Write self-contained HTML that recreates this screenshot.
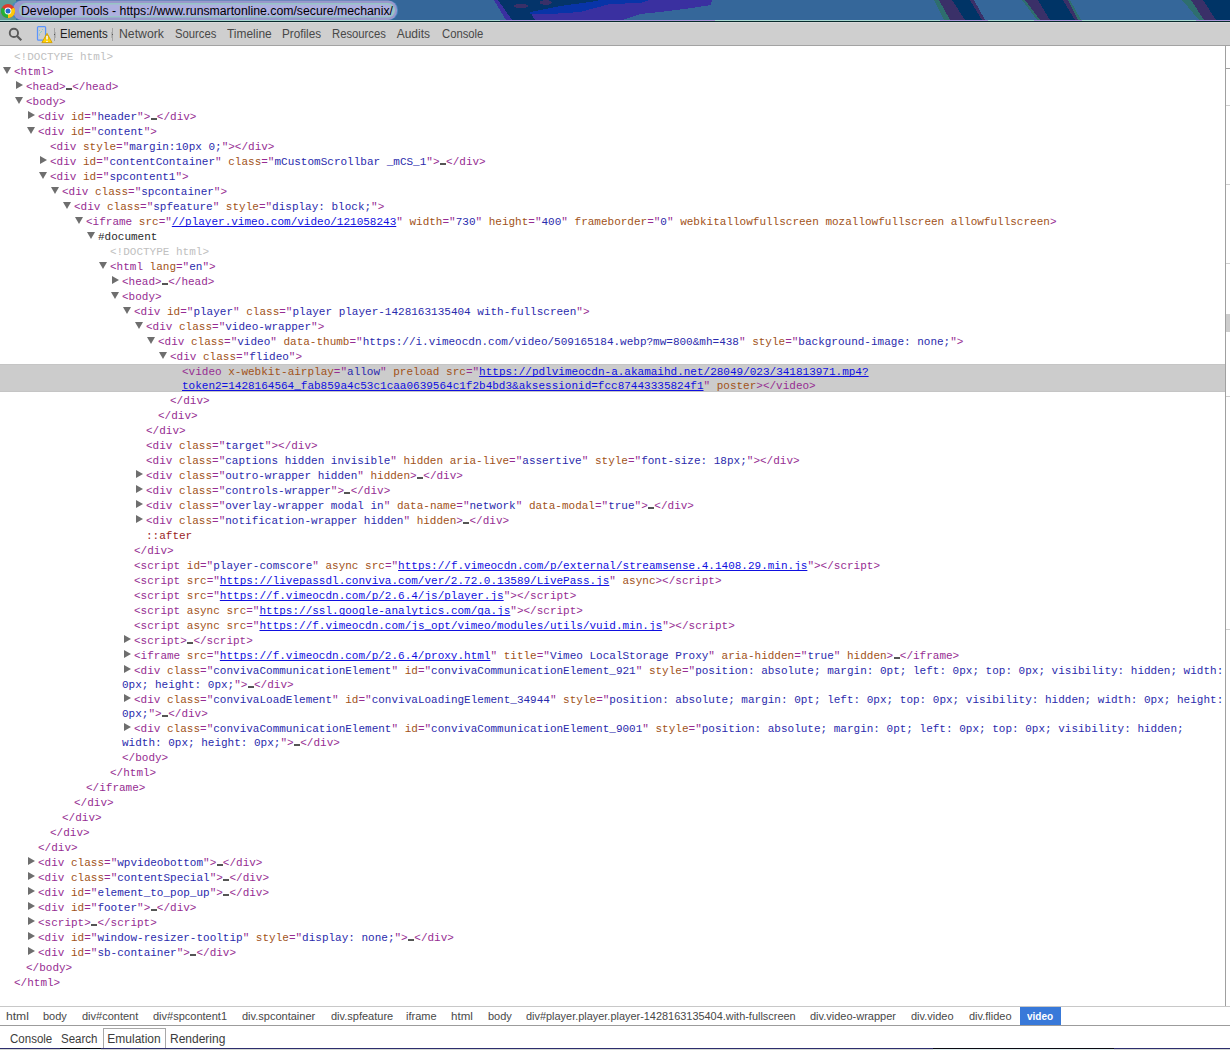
<!DOCTYPE html>
<html><head><meta charset="utf-8">
<style>
html,body{margin:0;padding:0;}
body{width:1230px;height:1050px;overflow:hidden;position:relative;background:#fff;font-family:"Liberation Sans",sans-serif;}
#title{position:absolute;left:0;top:0;width:1230px;height:22px;background:#35679a;overflow:hidden;}
#title svg{position:absolute;left:0;top:0;}
#ttext{position:absolute;left:21px;top:4px;transform:scaleX(1.022);transform-origin:0 0;font-size:12px;color:#000;white-space:nowrap;letter-spacing:0px;}
#toolbar{position:absolute;left:0;top:22px;width:1230px;height:23px;background:#cfcfcf;border-bottom:1px solid #a3a3a3;box-shadow:inset 0 1px 0 #dadada;}
.tab{position:absolute;top:5px;transform-origin:0 0;font-size:12px;color:#484848;white-space:nowrap;line-height:15px;}
.sep{position:absolute;top:6px;width:1px;height:13px;background:#a4a4a4;}
.row{position:absolute;white-space:pre;font-family:"Liberation Mono",monospace;font-size:11px;line-height:14px;height:14px;}
.sel{position:absolute;left:0;width:1225px;background:#cccccc;box-shadow:inset 0 1px 0 #c5c5c5, inset 0 -1px 0 #c5c5c5;}
.tg{color:#962c92}
.an{color:#a15218}
.av{color:#2a2aac}
.lk{color:#0f0fe0;text-decoration:underline;text-decoration-skip-ink:none;}
.px{color:#2a2a2a}
.dt{color:#c0c0c0}
.ps{color:#9a1e1e}
.el{display:inline-block;width:6.6px;height:14px;vertical-align:top;background:linear-gradient(90deg,#555 0,#555 1.8px,#bbb 1.8px,#bbb 2.2px,#555 2.2px,#555 3.8px,#bbb 3.8px,#bbb 4.2px,#555 4.2px) no-repeat 0.3px 8px/6px 2px;}
.ad{position:absolute;width:0;height:0;border-left:4px solid transparent;border-right:4px solid transparent;border-top:7px solid #6e6e6e;}
.ar{position:absolute;width:0;height:0;border-top:4px solid transparent;border-bottom:4px solid transparent;border-left:7px solid #6e6e6e;}
#vline{position:absolute;left:1225px;top:46px;width:1px;height:979px;background:#a0a0a0;}
.stub{position:absolute;left:1226px;width:4px;height:1px;background:#cfcfcf;}
#crumbs{position:absolute;left:0;top:1006px;width:1230px;height:18px;border-top:1px solid #c8c8c8;border-bottom:1px solid #9c9c9c;background:#fff;}
.cr{position:absolute;top:2px;font-size:11px;color:#484848;white-space:nowrap;line-height:14px;}
#drawer{position:absolute;left:0;top:1026px;width:1230px;height:22px;background:#fff;}
.dtab{position:absolute;top:6px;transform-origin:0 0;font-size:12px;color:#3c3c3c;white-space:nowrap;line-height:15px;}
#botline{position:absolute;left:0;top:1048px;width:1230px;height:1px;background:#2d2d6e;}
#botline2{position:absolute;left:0;top:1049px;width:1230px;height:1px;background:#d4d8d4;}
</style></head><body>
<div id="title">
<svg width="1230" height="22" viewBox="0 0 1230 22" shape-rendering="crispEdges">
  <rect x="0" y="20" width="1230" height="1" fill="#a6d6d0"/>
  <rect x="500" y="20" width="215" height="1" fill="#a898d8"/>
  <rect x="940" y="20" width="48" height="1" fill="#a898d8"/>
  <rect x="1034" y="20" width="48" height="1" fill="#a898d8"/>
  <rect x="1196" y="20" width="34" height="1" fill="#a898d8"/>
  <rect x="0" y="21" width="1230" height="1" fill="#082a2c"/>
  <!-- blob -->
  <path d="M494 0 L712 0 L711 5 L692 8 L660 12 L640 14 L622 20 L506 20 Z" fill="#3a30a0"/>
  <path d="M498 0 L600 0 L590 2 L560 6 L545 9 L530 12 L535 20 L512 20 Z" fill="#04346a"/>
  <path d="M545 9 L560 6 L590 2 L600 0 L650 0 L640 3 L610 4 L580 12 L550 14 L530 14 L530 12 Z" fill="#0834a8"/>
  <ellipse cx="521" cy="6" rx="7" ry="2.5" fill="#3a3068"/>
  <ellipse cx="546" cy="2.5" rx="6" ry="2.5" fill="#3a3068"/>
  <!-- stripes -->
  <path d="M934 0 L974 0 L985 20 L944 20 Z" fill="#2e6e6e"/>
  <path d="M939 0 L974 0 L985 20 L950 20 Z" fill="#3a3068"/>
  <path d="M952 0 L970 0 L982 20 L965 20 Z" fill="#003466"/>
  <path d="M1022 0 L1070 0 L1081 20 L1037 20 Z" fill="#2e6e6e"/>
  <path d="M1025 0 L1068 0 L1078 20 L1040 20 Z" fill="#3a3068"/>
  <path d="M1038 0 L1063 0 L1075 20 L1050 20 Z" fill="#003466"/>
  <path d="M1182 0 L1230 0 L1230 20 L1199 20 Z" fill="#2e6e6e"/>
  <path d="M1191 0 L1230 0 L1230 20 L1204 20 Z" fill="#3a3068"/>
  <path d="M1203 0 L1230 0 L1230 20 L1216 20 Z" fill="#003466"/>
</svg>
<svg width="1230" height="22" viewBox="0 0 1230 22" style="position:absolute;left:0;top:0">
  <rect x="0" y="0" width="16" height="20" fill="#5f9a98"/>
  <rect x="11" y="0.5" width="387" height="19.5" rx="9" fill="#4a88c0"/>
  <rect x="13" y="0.5" width="384" height="19.5" rx="9" fill="#9a98cc"/>
  <rect x="19" y="3" width="376" height="14.5" rx="7" fill="#96c4c6"/>
  <rect x="21" y="4.5" width="371" height="11.5" rx="5.5" fill="#aeb0e0"/>
  <g transform="translate(8,11)">
    <circle r="7" fill="#dd3a2c"/>
    <path d="M0 0 L6.06 -3.5 A7 7 0 0 1 0 7 Z" fill="#fcc80a"/>
    <path d="M0 0 L0 7 A7 7 0 0 1 -6.06 -3.5 Z" fill="#22b038"/>
    <circle r="3.4" fill="#fff"/>
    <circle r="2.5" fill="#1f6cd0"/>
  </g>
</svg>
<div id="ttext">Developer Tools - https://www.runsmartonline.com/secure/mechanix/</div>
</div>
<div id="toolbar">
  <svg style="position:absolute;left:0;top:0" width="60" height="23" viewBox="0 0 60 23">
    <circle cx="13.9" cy="10.9" r="4.15" fill="none" stroke="#5a5a5a" stroke-width="1.9"/>
    <line x1="16.8" y1="13.8" x2="21.3" y2="18.3" stroke="#5a5a5a" stroke-width="2.2"/>
    <rect x="37.5" y="4.5" width="8.1" height="13.7" rx="1" fill="none" stroke="#5a94fc" stroke-width="1.25"/>
    <g fill="#7cc8c8"><circle cx="39.5" cy="8.5" r="0.55"/><circle cx="42.5" cy="7.5" r="0.55"/><circle cx="41.5" cy="9.5" r="0.55"/><circle cx="40.5" cy="10.5" r="0.55"/><circle cx="39.5" cy="12" r="0.55"/><circle cx="39.5" cy="13" r="0.55"/></g>
    <path d="M47 11.4 L52.1 20.6 L41.9 20.6 Z" fill="#ffd200" stroke="#d29e00" stroke-width="0.9" stroke-linejoin="round"/>
    <rect x="45.7" y="13.3" width="2.6" height="4.8" fill="#d8a400"/><rect x="46.2" y="13.8" width="1.6" height="3.8" fill="#fff"/>
    <rect x="46.2" y="18.8" width="1.6" height="1.1" fill="#fff"/>
  </svg>
  <div class="sep" style="left:54px"></div><div style="position:absolute;left:55px;top:9.5px;width:1px;height:6px;background:#b4b4b4"></div><div style="position:absolute;left:54px;top:12px;width:1px;height:1px;background:#555"></div>
  <div class="tab" style="left:59.7px;transform:scaleX(0.955);color:#1e1e1e;">Elements</div>
  <div class="sep" style="left:112px"></div><div style="position:absolute;left:111px;top:9.5px;width:1px;height:6px;background:#b4b4b4"></div><div style="position:absolute;left:112px;top:12px;width:1px;height:1px;background:#555"></div>
  <div class="tab" style="left:118.7px;transform:scaleX(1.020);">Network</div>
  <div class="tab" style="left:174.7px;transform:scaleX(0.940);">Sources</div>
  <div class="tab" style="left:226.8px;transform:scaleX(0.995);">Timeline</div>
  <div class="tab" style="left:282.4px;transform:scaleX(0.977);">Profiles</div>
  <div class="tab" style="left:332.3px;transform:scaleX(0.940);">Resources</div>
  <div class="tab" style="left:396.7px;transform:scaleX(1.000);">Audits</div>
  <div class="tab" style="left:441.5px;transform:scaleX(0.940);">Console</div>
</div>
<div class="row" style="left:14.0px;top:50px"><span class="dt">&lt;!DOCTYPE html&gt;</span></div>
<div class="row" style="left:14.0px;top:65px"><span class="tg">&lt;html&gt;</span></div>
<div class="row" style="left:26.0px;top:80px"><span class="tg">&lt;head&gt;</span><span class="el"></span><span class="tg">&lt;/head&gt;</span></div>
<div class="row" style="left:26.0px;top:95px"><span class="tg">&lt;body&gt;</span></div>
<div class="row" style="left:38.0px;top:110px"><span class="tg">&lt;div </span><span class="an">id</span><span class="tg">=&quot;</span><span class="av">header</span><span class="tg">&quot;&gt;</span><span class="el"></span><span class="tg">&lt;/div&gt;</span></div>
<div class="row" style="left:38.0px;top:125px"><span class="tg">&lt;div </span><span class="an">id</span><span class="tg">=&quot;</span><span class="av">content</span><span class="tg">&quot;&gt;</span></div>
<div class="row" style="left:50.0px;top:140px"><span class="tg">&lt;div </span><span class="an">style</span><span class="tg">=&quot;</span><span class="av">margin:10px 0;</span><span class="tg">&quot;&gt;&lt;/div&gt;</span></div>
<div class="row" style="left:50.0px;top:155px"><span class="tg">&lt;div </span><span class="an">id</span><span class="tg">=&quot;</span><span class="av">contentContainer</span><span class="tg">&quot; </span><span class="an">class</span><span class="tg">=&quot;</span><span class="av">mCustomScrollbar _mCS_1</span><span class="tg">&quot;&gt;</span><span class="el"></span><span class="tg">&lt;/div&gt;</span></div>
<div class="row" style="left:50.0px;top:170px"><span class="tg">&lt;div </span><span class="an">id</span><span class="tg">=&quot;</span><span class="av">spcontent1</span><span class="tg">&quot;&gt;</span></div>
<div class="row" style="left:62.0px;top:185px"><span class="tg">&lt;div </span><span class="an">class</span><span class="tg">=&quot;</span><span class="av">spcontainer</span><span class="tg">&quot;&gt;</span></div>
<div class="row" style="left:74.0px;top:200px"><span class="tg">&lt;div </span><span class="an">class</span><span class="tg">=&quot;</span><span class="av">spfeature</span><span class="tg">&quot; </span><span class="an">style</span><span class="tg">=&quot;</span><span class="av">display: block;</span><span class="tg">&quot;&gt;</span></div>
<div class="row" style="left:86.0px;top:215px"><span class="tg">&lt;iframe </span><span class="an">src</span><span class="tg">=&quot;</span><span class="lk">//player.vimeo.com/video/121058243</span><span class="tg">&quot; </span><span class="an">width</span><span class="tg">=&quot;</span><span class="av">730</span><span class="tg">&quot; </span><span class="an">height</span><span class="tg">=&quot;</span><span class="av">400</span><span class="tg">&quot; </span><span class="an">frameborder</span><span class="tg">=&quot;</span><span class="av">0</span><span class="tg">&quot; </span><span class="an">webkitallowfullscreen</span><span class="tg"> </span><span class="an">mozallowfullscreen</span><span class="tg"> </span><span class="an">allowfullscreen</span><span class="tg">&gt;</span></div>
<div class="row" style="left:98.0px;top:230px"><span class="px">#document</span></div>
<div class="row" style="left:110.0px;top:245px"><span class="dt">&lt;!DOCTYPE html&gt;</span></div>
<div class="row" style="left:110.0px;top:260px"><span class="tg">&lt;html </span><span class="an">lang</span><span class="tg">=&quot;</span><span class="av">en</span><span class="tg">&quot;&gt;</span></div>
<div class="row" style="left:122.0px;top:275px"><span class="tg">&lt;head&gt;</span><span class="el"></span><span class="tg">&lt;/head&gt;</span></div>
<div class="row" style="left:122.0px;top:290px"><span class="tg">&lt;body&gt;</span></div>
<div class="row" style="left:134.0px;top:305px"><span class="tg">&lt;div </span><span class="an">id</span><span class="tg">=&quot;</span><span class="av">player</span><span class="tg">&quot; </span><span class="an">class</span><span class="tg">=&quot;</span><span class="av">player player-1428163135404 with-fullscreen</span><span class="tg">&quot;&gt;</span></div>
<div class="row" style="left:146.0px;top:320px"><span class="tg">&lt;div </span><span class="an">class</span><span class="tg">=&quot;</span><span class="av">video-wrapper</span><span class="tg">&quot;&gt;</span></div>
<div class="row" style="left:158.0px;top:335px"><span class="tg">&lt;div </span><span class="an">class</span><span class="tg">=&quot;</span><span class="av">video</span><span class="tg">&quot; </span><span class="an">data-thumb</span><span class="tg">=&quot;</span><span class="av">https://i.vimeocdn.com/video/509165184.webp?mw=800&amp;mh=438</span><span class="tg">&quot; </span><span class="an">style</span><span class="tg">=&quot;</span><span class="av">background-image: none;</span><span class="tg">&quot;&gt;</span></div>
<div class="row" style="left:170.0px;top:350px"><span class="tg">&lt;div </span><span class="an">class</span><span class="tg">=&quot;</span><span class="av">flideo</span><span class="tg">&quot;&gt;</span></div>
<div class="sel" style="top:364px;height:28px"></div>
<div class="row" style="left:182.0px;top:365px"><span class="tg">&lt;video </span><span class="an">x-webkit-airplay</span><span class="tg">=&quot;</span><span class="av">allow</span><span class="tg">&quot; </span><span class="an">preload</span><span class="tg"> </span><span class="an">src</span><span class="tg">=&quot;</span><span class="lk">https://pdlvimeocdn-a.akamaihd.net/28049/023/341813971.mp4?</span></div>
<div class="row" style="left:182.0px;top:379px"><span class="lk">token2=1428164564_fab859a4c53c1caa0639564c1f2b4bd3&amp;aksessionid=fcc87443335824f1</span><span class="tg">&quot; </span><span class="an">poster</span><span class="tg">&gt;&lt;/video&gt;</span></div>
<div class="row" style="left:170.0px;top:394px"><span class="tg">&lt;/div&gt;</span></div>
<div class="row" style="left:158.0px;top:409px"><span class="tg">&lt;/div&gt;</span></div>
<div class="row" style="left:146.0px;top:424px"><span class="tg">&lt;/div&gt;</span></div>
<div class="row" style="left:146.0px;top:439px"><span class="tg">&lt;div </span><span class="an">class</span><span class="tg">=&quot;</span><span class="av">target</span><span class="tg">&quot;&gt;&lt;/div&gt;</span></div>
<div class="row" style="left:146.0px;top:454px"><span class="tg">&lt;div </span><span class="an">class</span><span class="tg">=&quot;</span><span class="av">captions hidden invisible</span><span class="tg">&quot; </span><span class="an">hidden</span><span class="tg"> </span><span class="an">aria-live</span><span class="tg">=&quot;</span><span class="av">assertive</span><span class="tg">&quot; </span><span class="an">style</span><span class="tg">=&quot;</span><span class="av">font-size: 18px;</span><span class="tg">&quot;&gt;&lt;/div&gt;</span></div>
<div class="row" style="left:146.0px;top:469px"><span class="tg">&lt;div </span><span class="an">class</span><span class="tg">=&quot;</span><span class="av">outro-wrapper hidden</span><span class="tg">&quot; </span><span class="an">hidden</span><span class="tg">&gt;</span><span class="el"></span><span class="tg">&lt;/div&gt;</span></div>
<div class="row" style="left:146.0px;top:484px"><span class="tg">&lt;div </span><span class="an">class</span><span class="tg">=&quot;</span><span class="av">controls-wrapper</span><span class="tg">&quot;&gt;</span><span class="el"></span><span class="tg">&lt;/div&gt;</span></div>
<div class="row" style="left:146.0px;top:499px"><span class="tg">&lt;div </span><span class="an">class</span><span class="tg">=&quot;</span><span class="av">overlay-wrapper modal in</span><span class="tg">&quot; </span><span class="an">data-name</span><span class="tg">=&quot;</span><span class="av">network</span><span class="tg">&quot; </span><span class="an">data-modal</span><span class="tg">=&quot;</span><span class="av">true</span><span class="tg">&quot;&gt;</span><span class="el"></span><span class="tg">&lt;/div&gt;</span></div>
<div class="row" style="left:146.0px;top:514px"><span class="tg">&lt;div </span><span class="an">class</span><span class="tg">=&quot;</span><span class="av">notification-wrapper hidden</span><span class="tg">&quot; </span><span class="an">hidden</span><span class="tg">&gt;</span><span class="el"></span><span class="tg">&lt;/div&gt;</span></div>
<div class="row" style="left:146.0px;top:529px"><span class="ps">::after</span></div>
<div class="row" style="left:134.0px;top:544px"><span class="tg">&lt;/div&gt;</span></div>
<div class="row" style="left:134.0px;top:559px"><span class="tg">&lt;script </span><span class="an">id</span><span class="tg">=&quot;</span><span class="av">player-comscore</span><span class="tg">&quot; </span><span class="an">async</span><span class="tg"> </span><span class="an">src</span><span class="tg">=&quot;</span><span class="lk">https://f.vimeocdn.com/p/external/streamsense.4.1408.29.min.js</span><span class="tg">&quot;&gt;&lt;/script&gt;</span></div>
<div class="row" style="left:134.0px;top:574px"><span class="tg">&lt;script </span><span class="an">src</span><span class="tg">=&quot;</span><span class="lk">https://livepassdl.conviva.com/ver/2.72.0.13589/LivePass.js</span><span class="tg">&quot; </span><span class="an">async</span><span class="tg">&gt;&lt;/script&gt;</span></div>
<div class="row" style="left:134.0px;top:589px"><span class="tg">&lt;script </span><span class="an">src</span><span class="tg">=&quot;</span><span class="lk">https://f.vimeocdn.com/p/2.6.4/js/player.js</span><span class="tg">&quot;&gt;&lt;/script&gt;</span></div>
<div class="row" style="left:134.0px;top:604px"><span class="tg">&lt;script </span><span class="an">async</span><span class="tg"> </span><span class="an">src</span><span class="tg">=&quot;</span><span class="lk">https://ssl.google-analytics.com/ga.js</span><span class="tg">&quot;&gt;&lt;/script&gt;</span></div>
<div class="row" style="left:134.0px;top:619px"><span class="tg">&lt;script </span><span class="an">async</span><span class="tg"> </span><span class="an">src</span><span class="tg">=&quot;</span><span class="lk">https://f.vimeocdn.com/js_opt/vimeo/modules/utils/vuid.min.js</span><span class="tg">&quot;&gt;&lt;/script&gt;</span></div>
<div class="row" style="left:134.0px;top:634px"><span class="tg">&lt;script&gt;</span><span class="el"></span><span class="tg">&lt;/script&gt;</span></div>
<div class="row" style="left:134.0px;top:649px"><span class="tg">&lt;iframe </span><span class="an">src</span><span class="tg">=&quot;</span><span class="lk">https://f.vimeocdn.com/p/2.6.4/proxy.html</span><span class="tg">&quot; </span><span class="an">title</span><span class="tg">=&quot;</span><span class="av">Vimeo LocalStorage Proxy</span><span class="tg">&quot; </span><span class="an">aria-hidden</span><span class="tg">=&quot;</span><span class="av">true</span><span class="tg">&quot; </span><span class="an">hidden</span><span class="tg">&gt;</span><span class="el"></span><span class="tg">&lt;/iframe&gt;</span></div>
<div class="row" style="left:134.0px;top:664px"><span class="tg">&lt;div </span><span class="an">class</span><span class="tg">=&quot;</span><span class="av">convivaCommunicationElement</span><span class="tg">&quot; </span><span class="an">id</span><span class="tg">=&quot;</span><span class="av">convivaCommunicationElement_921</span><span class="tg">&quot; </span><span class="an">style</span><span class="tg">=&quot;</span><span class="av">position: absolute; margin: 0pt; left: 0px; top: 0px; visibility: hidden; width: </span></div>
<div class="row" style="left:122.0px;top:678px"><span class="av">0px; height: 0px;</span><span class="tg">&quot;&gt;</span><span class="el"></span><span class="tg">&lt;/div&gt;</span></div>
<div class="row" style="left:134.0px;top:693px"><span class="tg">&lt;div </span><span class="an">class</span><span class="tg">=&quot;</span><span class="av">convivaLoadElement</span><span class="tg">&quot; </span><span class="an">id</span><span class="tg">=&quot;</span><span class="av">convivaLoadingElement_34944</span><span class="tg">&quot; </span><span class="an">style</span><span class="tg">=&quot;</span><span class="av">position: absolute; margin: 0pt; left: 0px; top: 0px; visibility: hidden; width: 0px; height: </span></div>
<div class="row" style="left:122.0px;top:707px"><span class="av">0px;</span><span class="tg">&quot;&gt;</span><span class="el"></span><span class="tg">&lt;/div&gt;</span></div>
<div class="row" style="left:134.0px;top:722px"><span class="tg">&lt;div </span><span class="an">class</span><span class="tg">=&quot;</span><span class="av">convivaCommunicationElement</span><span class="tg">&quot; </span><span class="an">id</span><span class="tg">=&quot;</span><span class="av">convivaCommunicationElement_9001</span><span class="tg">&quot; </span><span class="an">style</span><span class="tg">=&quot;</span><span class="av">position: absolute; margin: 0pt; left: 0px; top: 0px; visibility: hidden; </span></div>
<div class="row" style="left:122.0px;top:736px"><span class="av">width: 0px; height: 0px;</span><span class="tg">&quot;&gt;</span><span class="el"></span><span class="tg">&lt;/div&gt;</span></div>
<div class="row" style="left:122.0px;top:751px"><span class="tg">&lt;/body&gt;</span></div>
<div class="row" style="left:110.0px;top:766px"><span class="tg">&lt;/html&gt;</span></div>
<div class="row" style="left:86.0px;top:781px"><span class="tg">&lt;/iframe&gt;</span></div>
<div class="row" style="left:74.0px;top:796px"><span class="tg">&lt;/div&gt;</span></div>
<div class="row" style="left:62.0px;top:811px"><span class="tg">&lt;/div&gt;</span></div>
<div class="row" style="left:50.0px;top:826px"><span class="tg">&lt;/div&gt;</span></div>
<div class="row" style="left:38.0px;top:841px"><span class="tg">&lt;/div&gt;</span></div>
<div class="row" style="left:38.0px;top:856px"><span class="tg">&lt;div </span><span class="an">class</span><span class="tg">=&quot;</span><span class="av">wpvideobottom</span><span class="tg">&quot;&gt;</span><span class="el"></span><span class="tg">&lt;/div&gt;</span></div>
<div class="row" style="left:38.0px;top:871px"><span class="tg">&lt;div </span><span class="an">class</span><span class="tg">=&quot;</span><span class="av">contentSpecial</span><span class="tg">&quot;&gt;</span><span class="el"></span><span class="tg">&lt;/div&gt;</span></div>
<div class="row" style="left:38.0px;top:886px"><span class="tg">&lt;div </span><span class="an">id</span><span class="tg">=&quot;</span><span class="av">element_to_pop_up</span><span class="tg">&quot;&gt;</span><span class="el"></span><span class="tg">&lt;/div&gt;</span></div>
<div class="row" style="left:38.0px;top:901px"><span class="tg">&lt;div </span><span class="an">id</span><span class="tg">=&quot;</span><span class="av">footer</span><span class="tg">&quot;&gt;</span><span class="el"></span><span class="tg">&lt;/div&gt;</span></div>
<div class="row" style="left:38.0px;top:916px"><span class="tg">&lt;script&gt;</span><span class="el"></span><span class="tg">&lt;/script&gt;</span></div>
<div class="row" style="left:38.0px;top:931px"><span class="tg">&lt;div </span><span class="an">id</span><span class="tg">=&quot;</span><span class="av">window-resizer-tooltip</span><span class="tg">&quot; </span><span class="an">style</span><span class="tg">=&quot;</span><span class="av">display: none;</span><span class="tg">&quot;&gt;</span><span class="el"></span><span class="tg">&lt;/div&gt;</span></div>
<div class="row" style="left:38.0px;top:946px"><span class="tg">&lt;div </span><span class="an">id</span><span class="tg">=&quot;</span><span class="av">sb-container</span><span class="tg">&quot;&gt;</span><span class="el"></span><span class="tg">&lt;/div&gt;</span></div>
<div class="row" style="left:26.0px;top:961px"><span class="tg">&lt;/body&gt;</span></div>
<div class="row" style="left:14.0px;top:976px"><span class="tg">&lt;/html&gt;</span></div>
<svg style="position:absolute;left:0;top:0" width="1230" height="1000" fill="#6e6e6e"><path d="M3.0 67 L11.0 67 L7.0 74 Z"/><path d="M16.0 81 L16.0 89 L23.0 85 Z"/><path d="M15.0 97 L23.0 97 L19.0 104 Z"/><path d="M28.0 111 L28.0 119 L35.0 115 Z"/><path d="M27.0 127 L35.0 127 L31.0 134 Z"/><path d="M40.0 156 L40.0 164 L47.0 160 Z"/><path d="M39.0 172 L47.0 172 L43.0 179 Z"/><path d="M51.0 187 L59.0 187 L55.0 194 Z"/><path d="M63.0 202 L71.0 202 L67.0 209 Z"/><path d="M75.0 217 L83.0 217 L79.0 224 Z"/><path d="M87.0 232 L95.0 232 L91.0 239 Z"/><path d="M99.0 262 L107.0 262 L103.0 269 Z"/><path d="M112.0 276 L112.0 284 L119.0 280 Z"/><path d="M111.0 292 L119.0 292 L115.0 299 Z"/><path d="M123.0 307 L131.0 307 L127.0 314 Z"/><path d="M135.0 322 L143.0 322 L139.0 329 Z"/><path d="M147.0 337 L155.0 337 L151.0 344 Z"/><path d="M159.0 352 L167.0 352 L163.0 359 Z"/><path d="M136.0 470 L136.0 478 L143.0 474 Z"/><path d="M136.0 485 L136.0 493 L143.0 489 Z"/><path d="M136.0 500 L136.0 508 L143.0 504 Z"/><path d="M136.0 515 L136.0 523 L143.0 519 Z"/><path d="M124.0 635 L124.0 643 L131.0 639 Z"/><path d="M124.0 650 L124.0 658 L131.0 654 Z"/><path d="M124.0 665 L124.0 673 L131.0 669 Z"/><path d="M124.0 694 L124.0 702 L131.0 698 Z"/><path d="M124.0 723 L124.0 731 L131.0 727 Z"/><path d="M28.0 857 L28.0 865 L35.0 861 Z"/><path d="M28.0 872 L28.0 880 L35.0 876 Z"/><path d="M28.0 887 L28.0 895 L35.0 891 Z"/><path d="M28.0 902 L28.0 910 L35.0 906 Z"/><path d="M28.0 917 L28.0 925 L35.0 921 Z"/><path d="M28.0 932 L28.0 940 L35.0 936 Z"/><path d="M28.0 947 L28.0 955 L35.0 951 Z"/></svg>
<div id="vline"></div>
<div class="stub" style="top:68px;background:#a0a0a0"></div>
<div class="stub" style="top:105px"></div>
<div class="stub" style="top:184px"></div>
<div class="stub" style="top:263px"></div>
<div class="stub" style="top:314px;height:18px;background:#cdcdcd"></div>
<div class="stub" style="top:396px"></div>
<div class="stub" style="top:629px"></div>
<div id="crumbs">
  <div class="cr" style="left:6px;transform:scaleX(1.1);transform-origin:0 0">html</div>
  <div class="cr" style="left:43px">body</div>
  <div class="cr" style="left:82px">div#content</div>
  <div class="cr" style="left:153px">div#spcontent1</div>
  <div class="cr" style="left:242px">div.spcontainer</div>
  <div class="cr" style="left:331px">div.spfeature</div>
  <div class="cr" style="left:406px">iframe</div>
  <div class="cr" style="left:451px;transform:scaleX(1.05);transform-origin:0 0">html</div>
  <div class="cr" style="left:488px">body</div>
  <div class="cr" style="left:526px;transform:scaleX(0.993);transform-origin:0 0">div#player.player.player-1428163135404.with-fullscreen</div>
  <div class="cr" style="left:810px">div.video-wrapper</div>
  <div class="cr" style="left:911px">div.video</div>
  <div class="cr" style="left:969px">div.flideo</div>
  <div style="position:absolute;left:1020px;top:0;width:41px;height:18px;background:#3879d9"></div>
  <div class="cr" style="left:1027px;color:#fff;font-weight:bold;transform:scaleX(0.91);transform-origin:0 0">video</div>
</div>
<div id="drawer">
  <div class="dtab" style="left:10.0px;transform:scaleX(0.960)">Console</div>
  <div class="dtab" style="left:61.4px;transform:scaleX(0.960)">Search</div>
  <div style="position:absolute;left:103px;top:2px;width:61px;height:20px;border:1px solid #a8a8a8;border-bottom:none"></div>
  <div class="dtab" style="left:107.3px;transform:scaleX(1.000)">Emulation</div>
  <div class="dtab" style="left:170.0px;transform:scaleX(1.000)">Rendering</div>
</div>
<div id="botline"></div>
<div id="botline2"></div>
<div style="position:absolute;left:60px;top:1048px;width:41px;height:1px;background:#0a0a14"></div><div style="position:absolute;left:60px;top:1049px;width:41px;height:1px;background:#e8f4f4"></div>
<div style="position:absolute;left:933px;top:1048px;width:181px;height:1px;background:#0a0a14"></div><div style="position:absolute;left:933px;top:1049px;width:181px;height:1px;background:#e0eeee"></div>
</body></html>
